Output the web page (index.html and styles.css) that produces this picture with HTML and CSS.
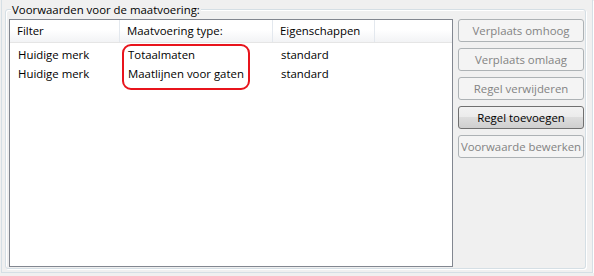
FILE: index.html
```html
<!DOCTYPE html>
<html>
<head>
<meta charset="utf-8">
<link rel="stylesheet" href="styles.css">
</head>
<body>
<div class="window">
  <div class="group">
    <div class="group-label">Voorwaarden voor de maatvoering:</div>
    <div class="group-body">
      <div class="listview">
        <div class="lv-header">
          <div class="hcell">Filter</div>
          <div class="hcell">Maatvoering type:</div>
          <div class="hcell">Eigenschappen</div>
          <div class="hcell"></div>
        </div>
        <div class="lv-row">
          <div class="cell">Huidige merk</div>
          <div class="cell">Totaalmaten</div>
          <div class="cell">standard</div>
        </div>
        <div class="lv-row">
          <div class="cell">Huidige merk</div>
          <div class="cell">Maatlijnen voor gaten</div>
          <div class="cell">standard</div>
        </div>
        <div class="highlight"></div>
      </div>
      <div class="buttons">
        <button class="btn" disabled>Verplaats omhoog</button>
        <button class="btn" disabled>Verplaats omlaag</button>
        <button class="btn" disabled>Regel verwijderen</button>
        <button class="btn active">Regel toevoegen</button>
        <button class="btn" disabled>Voorwaarde bewerken</button>
      </div>
    </div>
  </div>
</div>
</body>
</html>
```

FILE: styles.css
```css
html, body {
  margin: 0;
  padding: 0;
  background: #f0f0f0;
}
body {
  font-family: "Open Sans", "Noto Sans", sans-serif;
  font-size: 11.4px;
  color: #000;
}
.window {
  margin-left: 1px;
  width: 592px;
  height: 273px;
  box-sizing: border-box;
  border: 1px solid #d5dfe5;
  border-top: none;
  box-shadow: 1px 1px 0 #fff;
  padding: 9px 6px 3px 3px;
}
.group {
  height: 100%;
  box-sizing: border-box;
  border: 1px solid #d5dfe5;
  border-radius: 3px;
  box-shadow: 1px 1px 0 #fff, inset 1px 1px 0 #fff;
  display: flex;
  flex-direction: column;
}
.group-label {
  align-self: flex-start;
  margin: -8px 0 0 5px;
  padding: 0 1px;
  line-height: 15px;
  background: #f0f0f0;
}
.group-body {
  display: flex;
  align-items: flex-start;
  gap: 5px;
  padding: 2px 1px 0 3px;
}
.listview {
  position: relative;
  width: 444px;
  height: 248px;
  box-sizing: border-box;
  border: 1px solid #828790;
  background: #fff;
}
.lv-header {
  display: grid;
  grid-template-columns: 110px 153px 102px 1fr;
  height: 23px;
  box-sizing: border-box;
  border-bottom: 1px solid #e5e5e5;
  background: linear-gradient(#ffffff 0%, #ffffff 45%, #f2f3f5 100%);
}
.hcell {
  border-right: 1px solid #e3e8ee;
  padding-left: 7px;
  line-height: 22px;
}
.hcell:last-child {
  border-right: none;
}
.lv-row {
  display: grid;
  grid-template-columns: 110px 153px 102px;
  height: 19px;
  line-height: 19px;
}
.lv-header + .lv-row {
  margin-top: 2px;
}
.cell {
  padding-left: 8px;
  white-space: nowrap;
}
.highlight {
  position: absolute;
  left: 112px;
  top: 24px;
  width: 128px;
  height: 46px;
  box-sizing: border-box;
  border: 2px solid #e8141c;
  border-radius: 9px;
}
.buttons {
  display: flex;
  flex-direction: column;
  gap: 6px;
  width: 126px;
}
.btn {
  height: 23px;
  margin: 0;
  padding: 0;
  font: inherit;
  border: 1px solid #adb2b5;
  border-radius: 3px;
  background: #f4f4f4;
  color: #838383;
  text-align: center;
}
.btn.active {
  border-color: #707070;
  color: #000;
  background: linear-gradient(#f2f2f2 0%, #ebebeb 50%, #dddddd 50%, #cfcfcf 100%);
}
```
